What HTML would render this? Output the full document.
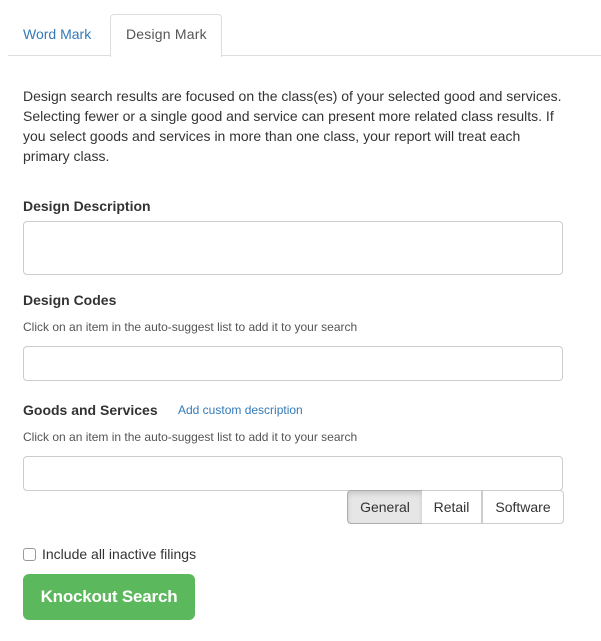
<!DOCTYPE html>
<html><head><style>
body{margin:0;width:601px;height:641px;background:#fff;font-family:"Liberation Sans",Arial,sans-serif;color:#333;position:relative;overflow:hidden}
.a{position:absolute;white-space:nowrap}
.line{position:absolute;left:8px;right:0;top:55px;height:1px;background:#ddd}
.tab{position:absolute;left:110px;top:14px;width:110px;height:42px;border:1px solid #ddd;border-bottom:none;border-radius:4px 4px 0 0;background:#fff}
.p{position:absolute;left:23px;top:86px;font-size:14px;line-height:20px;width:545px}
.b{font-weight:bold;font-size:14px}
.s{font-size:12px;color:#555}
.in{position:absolute;left:23px;width:538px;border:1px solid #ccc;border-radius:4px;background:#fff}
.btn{position:absolute;top:490px;height:32px;border:1px solid #ccc;font-size:14px;line-height:32px;text-align:center;background:#fff}
</style></head><body>
<div class="line"></div>
<div class="tab"></div>
<div class="a" style="left:23px;top:26px;font-size:14px;color:#337ab7">Word Mark</div>
<div class="a" style="left:126px;top:26px;font-size:14px;color:#555;letter-spacing:0.2px">Design Mark</div>
<div class="p">Design search results are focused on the class(es) of your selected good and services. Selecting fewer or a single good and service can present more related class results. If you select goods and services in more than one class, your report will treat each primary class.</div>
<div class="a b" style="left:23px;top:198px">Design Description</div>
<div class="in" style="top:221px;height:52px"></div>
<div class="a b" style="left:23px;top:292px">Design Codes</div>
<div class="a s" style="left:23px;top:320px">Click on an item in the auto-suggest list to add it to your search</div>
<div class="in" style="top:346px;height:33px"></div>
<div class="a b" style="left:23px;top:402px">Goods and Services</div>
<div class="a" style="left:178px;top:403px;font-size:12px;color:#337ab7">Add custom description</div>
<div class="a s" style="left:23px;top:430px">Click on an item in the auto-suggest list to add it to your search</div>
<div class="in" style="top:456px;height:33px"></div>
<div class="btn" style="left:347px;width:74px;background:#e6e6e6;border-color:#adadad;border-radius:4px 0 0 4px;box-shadow:inset 0 3px 5px rgba(0,0,0,.125)">General</div>
<div class="btn" style="left:422px;width:59px;border-left:none">Retail</div>
<div class="btn" style="left:482px;width:80px;border-radius:0 4px 4px 0">Software</div>
<div class="a" style="left:23px;top:548px;width:11px;height:11px;border:1px solid #999;border-radius:3px"></div>
<div class="a" style="left:42px;top:546px;font-size:14px">Include all inactive filings</div>
<div class="a" style="left:23px;top:574px;width:172px;height:46px;background:#5cb85c;border-radius:6px;color:#fff;font-size:17px;font-weight:bold;line-height:46px;text-align:center;letter-spacing:-0.2px">Knockout Search</div>
</body></html>
